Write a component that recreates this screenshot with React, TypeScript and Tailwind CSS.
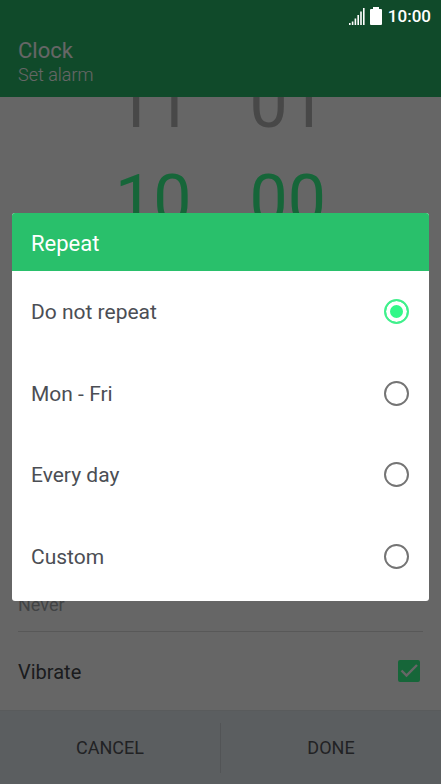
import { useState } from "react";

const pickerRows = [
  { hour: "11", minute: "01", style: "text-[#b4b4b4]" },
  { hour: "10", minute: "00", style: "text-[#38ff90]" },
];

const repeatOptions = ["Do not repeat", "Mon - Fri", "Every day", "Custom"];

function StatusBar() {
  return (
    <div className="absolute inset-x-0 top-0 flex h-8 items-center justify-end pr-[10px] text-white">
      <svg className="mr-[5px] h-[18px] w-4" viewBox="0 0 16 18" fill="currentColor" aria-hidden="true">
        <path d="M0 16h1.6v2H0zM2.8 14.5h1.6V18H2.8zM5.6 11.5h1.6V18H5.6zM8.4 8h1.6v10H8.4zM11.2 4.5h1.6V18h-1.6zM14 1h1.6v17H14z" />
      </svg>
      <svg className="mr-[6px] h-[18px] w-3" viewBox="0 0 12 18" fill="currentColor" aria-hidden="true">
        <path d="M3 0h6v2h2a1 1 0 0 1 1 1v14a1 1 0 0 1-1 1H1a1 1 0 0 1-1-1V3a1 1 0 0 1 1-1h2z" />
      </svg>
      <span className="text-[17px] leading-6 font-medium">10:00</span>
    </div>
  );
}

function TimePicker() {
  return (
    <div className="flex h-[151px] flex-col justify-end overflow-hidden text-[68px] leading-[96px]">
      {pickerRows.map((row) => (
        <div key={row.hour} className={`flex shrink-0 justify-center gap-[58px] ${row.style}`}>
          <span>{row.hour}</span>
          <span>{row.minute}</span>
        </div>
      ))}
    </div>
  );
}

function AlarmScreen() {
  const [vibrate, setVibrate] = useState(true);
  return (
    <div className="flex min-h-screen flex-col bg-white">
      <header className="flex h-[97px] flex-col justify-end bg-[#28b96a] px-[18px] pb-[10px] text-white">
        <h1 className="text-[22px] leading-6">Clock</h1>
        <p className="text-[18px] leading-6 font-light">Set alarm</p>
      </header>
      <main className="flex flex-1 flex-col justify-between">
        <TimePicker />
        <div className="px-[18px]">
          <p className="border-b border-[#dcdcdc] pb-[14px] text-[18px] leading-6 text-[#a4a8ac]">Never</p>
          <label className="flex h-[78px] items-center justify-between pr-[3px] text-[20px] leading-6 text-[#44464b]">
            <span className="pt-[2px]">Vibrate</span>
            <span className="grid">
              <input
                type="checkbox"
                checked={vibrate}
                onChange={(event) => setVibrate(event.target.checked)}
                className="peer col-start-1 row-start-1 size-[22px] appearance-none rounded-xs border-2 border-[#a4a8ac] checked:border-[#38ff90] checked:bg-[#38ff90]"
              />
              <svg
                className="pointer-events-none invisible col-start-1 row-start-1 size-[22px] peer-checked:visible"
                viewBox="0 0 22 22"
                fill="none"
                stroke="white"
                strokeWidth="2.4"
                aria-hidden="true"
              >
                <path d="M3.5 10.5 8.5 15.5 19 5" />
              </svg>
            </span>
          </label>
        </div>
      </main>
      <footer className="flex h-[74px] items-center border-t border-[#dfe3e6] bg-[#e4ebef] text-[18px] text-[#54565b]">
        <button type="button" className="h-[50px] flex-1 border-r border-[#cdd3d6]">CANCEL</button>
        <button type="button" className="h-[50px] flex-1">DONE</button>
      </footer>
    </div>
  );
}

function RepeatDialog() {
  const [selected, setSelected] = useState(repeatOptions[0]);
  return (
    <div
      role="dialog"
      aria-modal="true"
      aria-labelledby="repeat-title"
      className="w-full overflow-hidden rounded-[3px] bg-white"
    >
      <h2 id="repeat-title" className="flex h-[58px] items-center bg-[#29c06b] px-[19px] pt-[2px] text-[22px] text-white">
        Repeat
      </h2>
      <div className="grid h-[330px] auto-rows-fr pb-1">
        {repeatOptions.map((option) => (
          <label key={option} className="flex items-center justify-between pr-5 pl-[19px] text-[21px] text-[#4b4e54]">
            <span className="pt-[2px]">{option}</span>
            <input
              type="radio"
              name="repeat"
              checked={selected === option}
              onChange={() => setSelected(option)}
              className="size-[25px] appearance-none rounded-full border-2 border-[#747474] checked:border-[#40f08c] checked:bg-[#33f888] checked:shadow-[inset_0_0_0_4px_white]"
            />
          </label>
        ))}
      </div>
    </div>
  );
}

export default function App() {
  return (
    <div className="relative font-[Roboto,sans-serif]">
      <AlarmScreen />
      <div className="absolute inset-0 flex items-center bg-black/60 px-3 pt-[30px]">
        <RepeatDialog />
      </div>
      <StatusBar />
    </div>
  );
}
